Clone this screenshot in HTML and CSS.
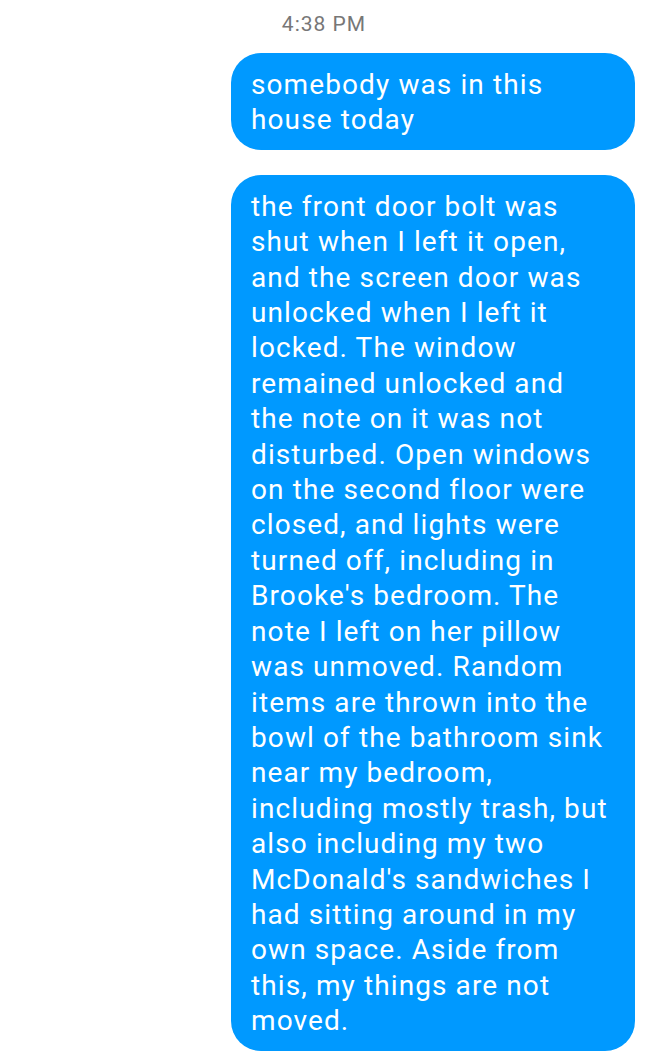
FILE: index.html
```html
<!DOCTYPE html>
<html lang="en">
<head>
<meta charset="utf-8">
<title>Messages</title>
<link rel="stylesheet" href="styles.css">
</head>
<body>
<div class="thread">
  <div class="timestamp">4:38 PM</div>
  <div class="bubble">somebody was in this house today</div>
  <div class="bubble">the front door bolt was shut when I left it open, and the screen door was unlocked when I left it locked. The window remained unlocked and the note on it was not disturbed. Open windows on the second floor were closed, and lights were turned off, including in Brooke's bedroom. The note I left on her pillow was unmoved. Random items are thrown into the bowl of the bathroom sink near my bedroom, including mostly trash, but also including my two McDonald's sandwiches I had sitting around in my own space. Aside from this, my things are not moved.</div>
</div>
</body>
</html>
```
FILE: styles.css
```css
html, body {
  margin: 0;
  padding: 0;
  background: #ffffff;
}
.thread {
  display: flex;
  flex-direction: column;
  align-items: flex-end;
  gap: 24px;
  padding: 10px 13px 0 0;
  font-family: Roboto, "Noto Sans", sans-serif;
}
.timestamp {
  align-self: stretch;
  text-align: center;
  padding-left: 13px;
  color: #777777;
  font-size: 21px;
  letter-spacing: 1px;
  line-height: 28px;
  margin-bottom: -9px;
}
.bubble {
  box-sizing: border-box;
  width: 404px;
  padding: 14px 25px 12px 20px;
  background: #0099ff;
  color: #ffffff;
  border-radius: 30px;
  font-size: 28px;
  letter-spacing: 1.1px;
  line-height: 35.4px;
}
.bubble + .bubble {
  margin-top: 1px;
}
```
